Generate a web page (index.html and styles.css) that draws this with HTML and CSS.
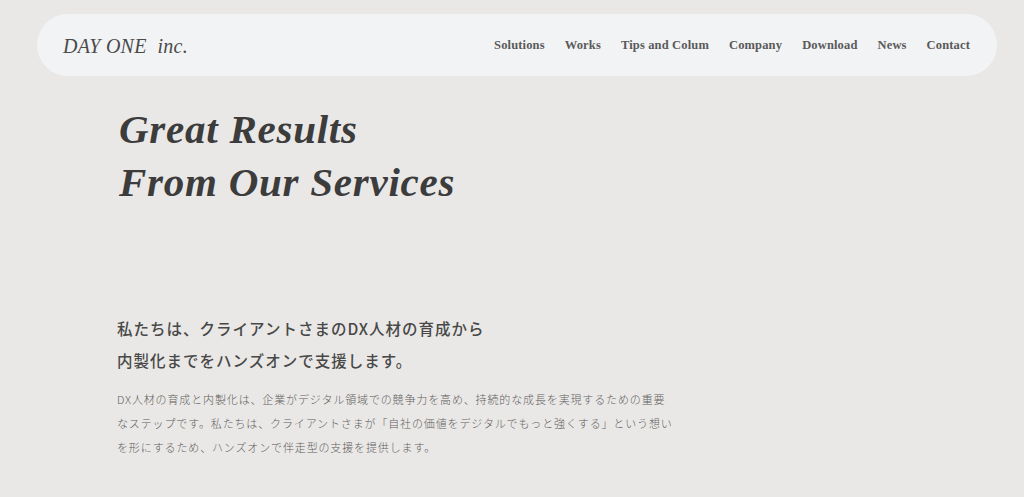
FILE: index.html
```html
<!DOCTYPE html>
<html lang="ja">
<head>
<meta charset="utf-8">
<title>DAY ONE inc.</title>
<link rel="stylesheet" href="styles.css">
</head>
<body>
<header class="site-header">
  <a class="logo" href="#">DAY ONE&nbsp; inc.</a>
  <nav class="nav">
    <a href="#">Solutions</a>
    <a href="#">Works</a>
    <a href="#">Tips and Colum</a>
    <a href="#">Company</a>
    <a href="#">Download</a>
    <a href="#">News</a>
    <a href="#">Contact</a>
  </nav>
</header>
<main class="main">
  <h1 class="hero-title">Great Results<br>From Our Services</h1>
  <section class="intro">
    <h2 class="intro-title">私たちは、クライアントさまのDX人材の育成から<br>内製化までをハンズオンで支援します。</h2>
    <p class="intro-text">DX人材の育成と内製化は、企業がデジタル領域での競争力を高め、持続的な成長を実現するための重要<br>なステップです。私たちは、クライアントさまが「自社の価値をデジタルでもっと強くする」という想い<br>を形にするため、ハンズオンで伴走型の支援を提供します。</p>
  </section>
</main>
</body>
</html>
```

FILE: styles.css
```css
* { box-sizing: border-box; }
html, body { margin: 0; padding: 0; }
body {
  background: #eae8e6;
  color: #3c3c3c;
  font-family: "Liberation Serif", "DejaVu Serif", serif;
}
a { color: inherit; text-decoration: none; }

.site-header {
  margin: 14px 27px 0 37px;
  height: 62px;
  border-radius: 31px;
  background: #f2f3f5;
  display: flex;
  align-items: center;
  justify-content: space-between;
  padding: 0 27px 0 26px;
}
.logo {
  font-style: italic;
  font-size: 20px;
  color: #4a4a4a;
  letter-spacing: 0.3px;
  padding-top: 2px;
}
.nav {
  display: flex;
  gap: 20px;
}
.nav a {
  font-size: 12.5px;
  font-weight: bold;
  letter-spacing: 0.15px;
  color: #5a5a5a;
}

.main {
  padding: 0 0 0 119px;
}
.hero-title {
  margin: 27px 0 0;
  font-style: italic;
  font-weight: bold;
  font-size: 41px;
  line-height: 53px;
  color: #3c3c3c;
  letter-spacing: 0.75px;
}
.intro {
  margin-top: 103px;
}
.intro-title {
  margin: 0;
  margin-left: -2px;
  font-family: "Noto Sans CJK JP", sans-serif;
  font-weight: 500;
  font-size: 15.5px;
  line-height: 32px;
  letter-spacing: 1px;
  color: #484848;
}
.intro-text {
  margin: 11px 0 0 -2px;
  font-family: "Noto Sans CJK JP", sans-serif;
  font-weight: 300;
  font-size: 11px;
  line-height: 24px;
  letter-spacing: 0.86px;
  color: #5e5e5e;
}
```
